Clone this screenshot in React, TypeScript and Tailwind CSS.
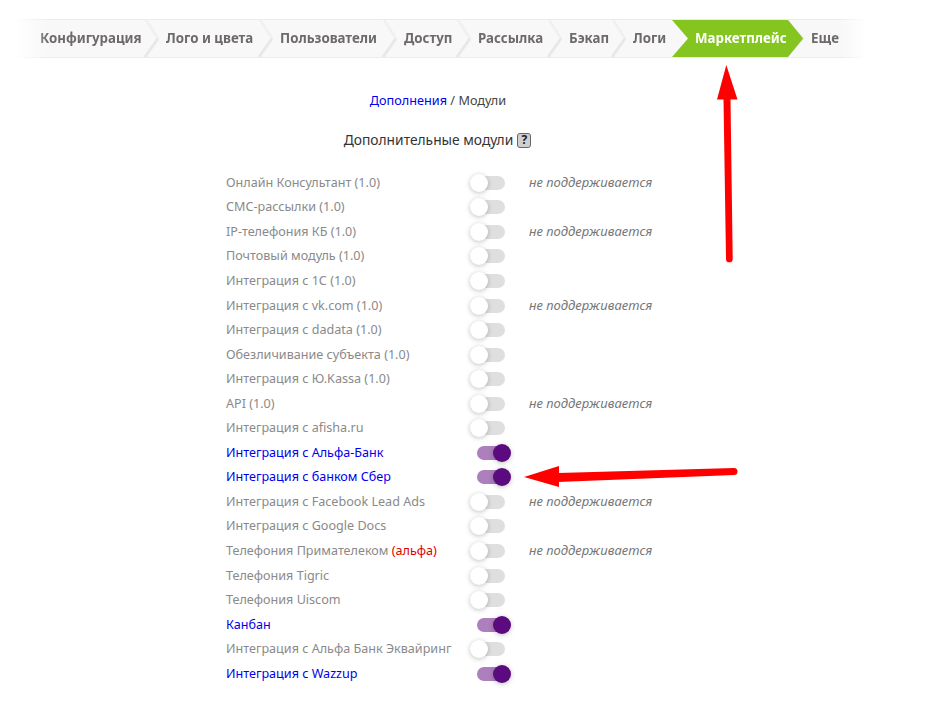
import React from 'react'

const tabs = [
  { label: 'Конфигурация', cls: 'w-[128px] pl-[14px]' },
  { label: 'Лого и цвета', cls: 'w-[114px] pl-[12px]' },
  { label: 'Пользователи', cls: 'w-[124px] pl-[12px]' },
  { label: 'Доступ', cls: 'w-[74px] pl-[12px]' },
  { label: 'Рассылка', cls: 'w-[91px] pl-[12px]' },
  { label: 'Бэкап', cls: 'w-[64px] pl-[12px]' },
  { label: 'Логи', cls: 'w-[51px] pl-[12px]', last: true },
]

const modules: { name: string; on?: boolean; ns?: boolean; alpha?: boolean }[] = [
  { name: 'Онлайн Консультант (1.0)', ns: true },
  { name: 'СМС-рассылки (1.0)' },
  { name: 'IP-телефония КБ (1.0)', ns: true },
  { name: 'Почтовый модуль (1.0)' },
  { name: 'Интеграция с 1С (1.0)' },
  { name: 'Интеграция с vk.com (1.0)', ns: true },
  { name: 'Интеграция с dadata (1.0)' },
  { name: 'Обезличивание субъекта (1.0)' },
  { name: 'Интеграция с Ю.Kassa (1.0)' },
  { name: 'API (1.0)', ns: true },
  { name: 'Интеграция с afisha.ru' },
  { name: 'Интеграция с Альфа-Банк', on: true },
  { name: 'Интеграция с банком Сбер', on: true },
  { name: 'Интеграция с Facebook Lead Ads', ns: true },
  { name: 'Интеграция с Google Docs' },
  { name: 'Телефония Примателеком', ns: true, alpha: true },
  { name: 'Телефония Tigric' },
  { name: 'Телефония Uiscom' },
  { name: 'Канбан', on: true },
  { name: 'Интеграция с Альфа Банк Эквайринг' },
  { name: 'Интеграция с Wazzup', on: true },
]

function Chevron() {
  return (
    <svg className="absolute right-[-8px] top-0 z-10" width="20" height="37" viewBox="0 0 20 37">
      <path d="M4 0 L16 18.5" fill="none" stroke="#f0f0f0" strokeWidth="2.5" />
      <path d="M16 18.5 L3 37" fill="none" stroke="#e8e8e8" strokeWidth="3" />
    </svg>
  )
}

function Toggle({ on }: { on?: boolean }) {
  if (on) {
    return (
      <div className="relative w-[33px] h-[14px] rounded-full bg-[#ad7fbc] ml-[7px]">
        <div className="absolute right-[-1px] top-[-2px] w-[18px] h-[18px] rounded-full bg-[#5c0a80] shadow-[0_1px_5px_rgba(0,0,0,0.25)]" />
      </div>
    )
  }
  return (
    <div className="relative w-[32px] h-[14px] rounded-full bg-[#dfdfdf] ml-[3px]">
      <div className="absolute left-[-3px] top-[-2px] w-[18px] h-[18px] rounded-full bg-white shadow-[0_1px_5px_rgba(0,0,0,0.25)]" />
    </div>
  )
}

export default function App() {
  return (
    <div className="relative w-[948px] h-[701px] overflow-hidden bg-white font-['Noto_Sans','Open_Sans',sans-serif]">
      {/* top menu */}
      <div className="pt-[19px] pl-[14px]">
        <div className="flex h-[39px] w-[852px] border-y border-[#ececec] bg-[#f8f8f8] [mask-image:linear-gradient(to_right,transparent,black_4%,black_97%,transparent)]">
          <div className="w-[12px]" />
          {tabs.map(t => (
            <div key={t.label} className={`relative flex items-center ${t.cls} text-[13.3px] font-bold text-[#6f6a6a] whitespace-nowrap`}>
              {t.label}
              {!t.last && <Chevron />}
            </div>
          ))}
          <div className="relative z-20 w-[132px] h-[37px]">
            <svg className="absolute inset-0" width="134" height="37" viewBox="0 0 134 37">
              <path d="M116 0 L132 18.5 L116 37" fill="#dcdcdc" />
              <path d="M0 0 H116 L131 18.5 L116 37 H0 L16 18.5 Z" fill="#84c51f" />
            </svg>
            <span className="absolute left-[23px] top-[9px] text-[13.3px] font-bold text-white whitespace-nowrap">Маркетплейс</span>
          </div>
          <div className="flex items-center pl-[7px] text-[13.3px] font-bold text-[#6f6a6a]">Еще</div>
        </div>
      </div>

      {/* breadcrumbs */}
      <div className="mt-[32px] w-[876px] text-center text-[12.7px] leading-[20px] text-[#444]">
        <span className="text-[#0000ee]">Дополнения</span> / Модули
      </div>
      <div className="mt-[20px] flex w-[875px] items-center justify-center gap-[4px] text-[13.8px] leading-[20px] text-[#333]">
        Дополнительные модули
        <span className="flex h-[15px] w-[14px] items-center justify-center rounded-[3px] border border-[#666] bg-[#d0d0d0] text-[12px] font-bold leading-none text-[#222]">?</span>
      </div>

      {/* module list */}
      <div className="mt-[20.5px] pl-[226px]">
        {modules.map(m => (
          <div key={m.name} className="flex h-[24.55px] items-center text-[12.6px]">
            <div className={`w-[244px] pt-[1px] whitespace-nowrap ${m.on ? 'text-[#0000ee]' : 'text-[#8a8a8a]'}`}>
              {m.name}
              {m.alpha && <span className="text-[#e00000]"> (альфа)</span>}
            </div>
            <div className="w-[59px]">
              <Toggle on={m.on} />
            </div>
            {m.ns && <div className="text-[13px] italic text-[#777]">не поддерживается</div>}
          </div>
        ))}
      </div>

      {/* red annotation arrows */}
      <svg className="absolute inset-0 pointer-events-none z-30" width="948" height="701" viewBox="0 0 948 701">
        <path d="M723.5 99 L730.5 99 L732.7 259 A3.3 3.3 0 0 1 726 259 Z" fill="#ff0000" />
        <path d="M726.3 65 L737.5 99.5 L717 99.5 Z" fill="#ff0000" />
        <path d="M558 473 L734 468 A3.4 3.4 0 0 1 734 475 L558 482 Z" fill="#ff0000" />
        <path d="M524 477 L559 466 L559 487 Z" fill="#ff0000" />
      </svg>
    </div>
  )
}
